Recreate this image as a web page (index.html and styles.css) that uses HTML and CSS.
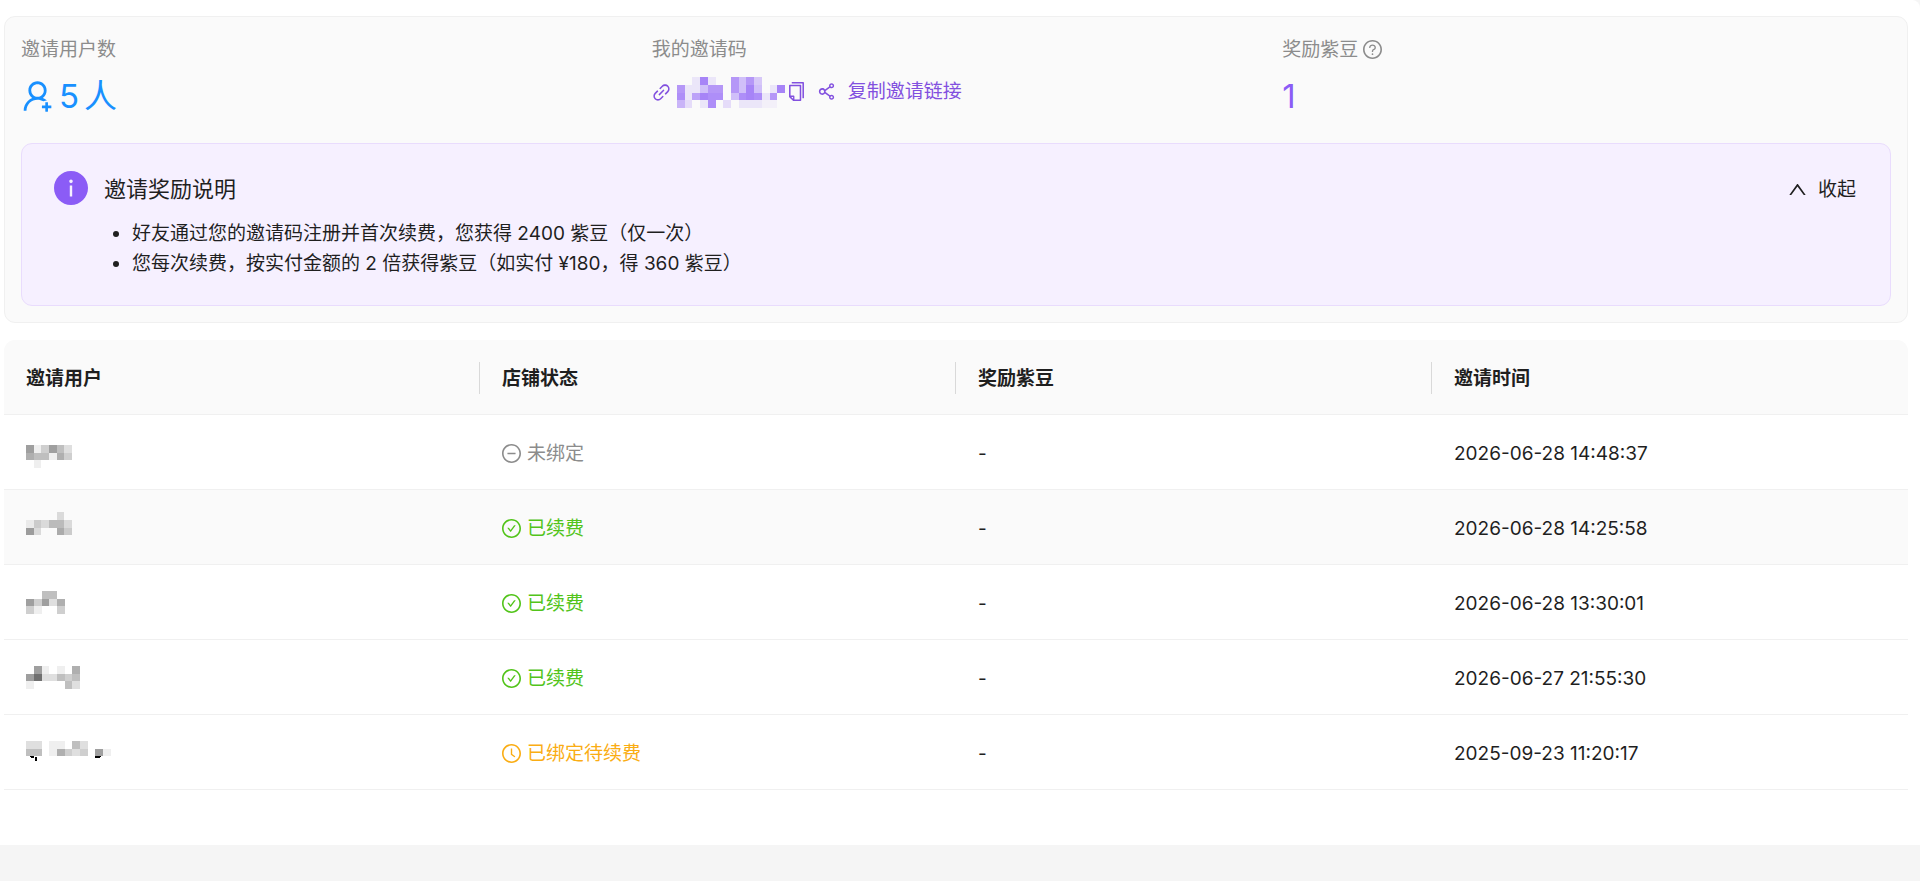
FILE: index.html
```html
<!DOCTYPE html>
<html lang="zh-CN">
<head>
  <meta charset="UTF-8">
  <meta name="viewport" content="width=device-width, initial-scale=1.0">
  <title>邀请奖励</title>
  <link rel="stylesheet" href="styles.css">
</head>
<body>
  <!-- 图标定义 -->
  <svg class="icon-defs" aria-hidden="true">
    <symbol id="icon-user-add" viewBox="64 64 896 896"><path d="M678.3 642.4c24.2-13 51.9-20.4 81.4-20.4h.1c3 0 4.4-3.6 2.2-5.6a371.67 371.67 0 00-103.7-65.8c-.4-.2-.8-.3-1.2-.5C719.2 505 759.6 431.7 759.6 349c0-137-110.8-248-247.5-248S264.7 212 264.7 349c0 82.7 40.4 156 102.6 201.1-.4.2-.8.3-1.2.5-44.7 18.9-84.8 46-119.3 80.6a373.42 373.42 0 00-80.4 119.5A373.6 373.6 0 00137 888.8a8 8 0 008 8.2h59.9c4.3 0 7.9-3.5 8-7.8 2-77.2 32.9-149.5 87.6-204.3C357 628.2 432.2 597 512.2 597c56.7 0 111.1 15.7 158 45.1a8.1 8.1 0 008.1.3zM512.2 521c-45.8 0-88.9-17.9-121.4-50.4A171.2 171.2 0 01340.5 349c0-45.9 17.9-89.1 50.3-121.6S466.3 177 512.2 177s88.9 17.9 121.4 50.4A171.2 171.2 0 01683.9 349c0 45.9-17.9 89.1-50.3 121.6C601.1 503.1 558 521 512.2 521zM880 759h-84v-84c0-4.4-3.6-8-8-8h-56c-4.4 0-8 3.6-8 8v84h-84c-4.4 0-8 3.6-8 8v56c0 4.4 3.6 8 8 8h84v84c0 4.4 3.6 8 8 8h56c4.4 0 8-3.6 8-8v-84h84c4.4 0 8-3.6 8-8v-56c0-4.4-3.6-8-8-8z"/></symbol>
    <symbol id="icon-link" viewBox="64 64 896 896"><path d="M574 665.4a8.03 8.03 0 00-11.3 0L446.5 781.6c-53.8 53.8-144.6 59.5-204 0-59.5-59.5-53.8-150.2 0-204l116.2-116.2c3.1-3.1 3.1-8.2 0-11.3l-39.8-39.8a8.03 8.03 0 00-11.3 0L191.4 526.5c-84.6 84.6-84.6 221.5 0 306s221.5 84.6 306 0l116.2-116.2c3.1-3.1 3.1-8.2 0-11.3L574 665.4zm258.6-474c-84.6-84.6-221.5-84.6-306 0L410.3 307.6a8.03 8.03 0 000 11.3l39.7 39.7c3.1 3.1 8.2 3.1 11.3 0l116.2-116.2c53.8-53.8 144.6-59.5 204 0 59.5 59.5 53.8 150.2 0 204L665.3 562.6a8.03 8.03 0 000 11.3l39.8 39.8c3.1 3.1 8.2 3.1 11.3 0l116.2-116.2c84.5-84.6 84.5-221.5 0-306.1zM610.1 372.3a8.03 8.03 0 00-11.3 0L372.3 598.7a8.03 8.03 0 000 11.3l39.6 39.6c3.1 3.1 8.2 3.1 11.3 0l226.4-226.4c3.1-3.1 3.1-8.2 0-11.3l-39.5-39.6z"/></symbol>
    <symbol id="icon-copy" viewBox="64 64 896 896"><path d="M832 64H296c-4.4 0-8 3.6-8 8v56c0 4.4 3.6 8 8 8h496v688c0 4.4 3.6 8 8 8h56c4.4 0 8-3.6 8-8V96c0-17.7-14.3-32-32-32zM704 192H192c-17.7 0-32 14.3-32 32v530.7c0 8.5 3.4 16.6 9.4 22.6l173.3 173.3c2.2 2.2 4.7 4 7.4 5.5v1.9h4.2c3.5 1.3 7.2 2 11 2H704c17.7 0 32-14.3 32-32V224c0-17.7-14.3-32-32-32zM350 856.2L263.9 770H350v86.2zM664 888H414V746c0-22.1-17.9-40-40-40H232V264h432v624z"/></symbol>
    <symbol id="icon-share" viewBox="64 64 896 896"><path d="M752 664c-28.5 0-54.8 10-75.4 26.7L469.4 540.8a160.68 160.68 0 000-57.6l207.2-149.9C697.2 350 723.5 360 752 360c66.2 0 120-53.8 120-120s-53.8-120-120-120-120 53.8-120 120c0 11.6 1.6 22.7 4.7 33.3L439.9 415.8C410.7 377.1 364.3 352 312 352c-88.4 0-160 71.6-160 160s71.6 160 160 160c52.3 0 98.7-25.1 127.9-63.8l196.8 142.5c-3.1 10.6-4.7 21.8-4.7 33.3 0 66.2 53.8 120 120 120s120-53.8 120-120-53.8-120-120-120zm0-476c28.7 0 52 23.3 52 52s-23.3 52-52 52-52-23.3-52-52 23.3-52 52-52zM312 600c-48.5 0-88-39.5-88-88s39.5-88 88-88 88 39.5 88 88-39.5 88-88 88zm440 236c-28.7 0-52-23.3-52-52s23.3-52 52-52 52 23.3 52 52-23.3 52-52 52z"/></symbol>
    <symbol id="icon-question" viewBox="64 64 896 896"><path d="M512 64C264.6 64 64 264.6 64 512s200.6 448 448 448 448-200.6 448-448S759.4 64 512 64zm0 820c-205.4 0-372-166.6-372-372s166.6-372 372-372 372 166.6 372 372-166.6 372-372 372z"/><path d="M623.6 316.7C593.6 290.4 554 276 512 276s-81.6 14.5-111.6 40.7C369.2 344 352 380.7 352 420v7.6c0 4.4 3.6 8 8 8h48c4.4 0 8-3.6 8-8V420c0-44.1 43.1-80 96-80s96 35.9 96 80c0 31.1-22 59.6-56.1 72.7-21.2 8.1-39.2 22.3-52.1 40.9-13.1 19-19.9 41.8-19.9 64.9V620c0 4.4 3.6 8 8 8h48c4.4 0 8-3.6 8-8v-22.7a48.3 48.3 0 0130.9-44.8c59-22.7 97.1-74.7 97.1-132.5.1-39.3-17.1-76-48.3-103.3zM472 732a40 40 0 1080 0 40 40 0 10-80 0z"/></symbol>
    <symbol id="icon-info" viewBox="64 64 896 896"><path d="M512 64C264.6 64 64 264.6 64 512s200.6 448 448 448 448-200.6 448-448S759.4 64 512 64zm32 664c0 4.4-3.6 8-8 8h-48c-4.4 0-8-3.6-8-8V456c0-4.4 3.6-8 8-8h48c4.4 0 8 3.6 8 8v272zm-32-344a48.01 48.01 0 010-96 48.01 48.01 0 010 96z"/></symbol>
    <symbol id="icon-up" viewBox="64 64 896 896"><path d="M890.5 755.3L537.9 269.2c-12.8-17.6-39-17.6-51.7 0L133.5 755.3A8 8 0 00140 768h75c5.1 0 9.9-2.5 12.9-6.6L512 369.8l284.1 391.6c3 4.1 7.8 6.6 12.9 6.6h75c6.5 0 10.3-7.4 6.5-12.7z"/></symbol>
    <symbol id="icon-minus" viewBox="64 64 896 896"><path d="M696 480H328c-4.4 0-8 3.6-8 8v48c0 4.4 3.6 8 8 8h368c4.4 0 8-3.6 8-8v-48c0-4.4-3.6-8-8-8z"/><path d="M512 64C264.6 64 64 264.6 64 512s200.6 448 448 448 448-200.6 448-448S759.4 64 512 64zm0 820c-205.4 0-372-166.6-372-372s166.6-372 372-372 372 166.6 372 372-166.6 372-372 372z"/></symbol>
    <symbol id="icon-check" viewBox="64 64 896 896"><path d="M699 353h-46.9c-10.2 0-19.9 4.9-25.9 13.3L469 584.3l-71.2-98.8c-6-8.3-15.6-13.3-25.9-13.3H325c-6.5 0-10.3 7.4-6.5 12.7l124.6 172.8a31.8 31.8 0 0051.7 0l210.6-292c3.9-5.3.1-12.7-6.4-12.7z"/><path d="M512 64C264.6 64 64 264.6 64 512s200.6 448 448 448 448-200.6 448-448S759.4 64 512 64zm0 820c-205.4 0-372-166.6-372-372s166.6-372 372-372 372 166.6 372 372-166.6 372-372 372z"/></symbol>
    <symbol id="icon-clock" viewBox="64 64 896 896"><path d="M512 64C264.6 64 64 264.6 64 512s200.6 448 448 448 448-200.6 448-448S759.4 64 512 64zm0 820c-205.4 0-372-166.6-372-372s166.6-372 372-372 372 166.6 372 372-166.6 372-372 372z"/><path d="M686.7 638.6L544.1 535.5V288c0-4.4-3.6-8-8-8H488c-4.4 0-8 3.6-8 8v275.4c0 2.6 1.2 5 3.3 6.5l165.4 120.6c3.6 2.6 8.6 1.8 11.2-1.7l28.6-39c2.6-3.7 1.8-8.7-1.8-11.2z"/></symbol>
  </svg>

  <main class="page">
    <section class="card">
      <div class="stats">
        <div class="stat">
          <div class="stat-label">邀请用户数</div>
          <div class="stat-value blue">
            <svg class="icon"><use href="#icon-user-add"/></svg>
            <span>5</span>
            <span>人</span>
          </div>
        </div>
        <div class="stat">
          <div class="stat-label">我的邀请码</div>
          <div class="invite-code">
            <svg class="icon"><use href="#icon-link"/></svg>
            <svg class="mosaic code" viewBox="0 0 14 4" data-cells="002c200a6a50002 a226aa0a6c602c b29cbb06bcb2a0 7302b030222110"></svg>
            <button type="button" class="btn-copy" aria-label="复制邀请码"><svg class="icon"><use href="#icon-copy"/></svg></button>
            <button type="button" class="btn-share"><svg class="icon"><use href="#icon-share"/></svg>复制邀请链接</button>
          </div>
        </div>
        <div class="stat">
          <div class="stat-label">奖励紫豆<svg class="icon"><use href="#icon-question"/></svg></div>
          <div class="stat-value purple">1</div>
        </div>
      </div>

      <div class="notice">
        <svg class="icon notice-icon"><use href="#icon-info"/></svg>
        <div class="notice-body">
          <h2>邀请奖励说明</h2>
          <ul>
            <li>好友通过您的邀请码注册并首次续费，您获得 2400 紫豆（仅一次）</li>
            <li>您每次续费，按实付金额的 2 倍获得紫豆（如实付 ¥180，得 360 紫豆）</li>
          </ul>
        </div>
        <button type="button" class="btn-toggle"><svg class="icon"><use href="#icon-up"/></svg>收起</button>
      </div>
    </section>

    <table class="invite-table">
      <thead>
        <tr>
          <th>邀请用户</th>
          <th>店铺状态</th>
          <th>奖励紫豆</th>
          <th>邀请时间</th>
        </tr>
      </thead>
      <tbody>
        <tr>
          <td><svg class="mosaic" data-cells="000000 613642 544153 010000"></svg></td>
          <td><span class="status gray"><svg class="icon"><use href="#icon-minus"/></svg>未绑定</span></td>
          <td>-</td>
          <td>2026-06-28 14:48:37</td>
        </tr>
        <tr class="active">
          <td><svg class="mosaic" data-cells="000020 132442 620053 000000"></svg></td>
          <td><span class="status green"><svg class="icon"><use href="#icon-check"/></svg>已续费</span></td>
          <td>-</td>
          <td>2026-06-28 14:25:58</td>
        </tr>
        <tr>
          <td><svg class="mosaic" data-cells="00440 63625 31003"></svg></td>
          <td><span class="status green"><svg class="icon"><use href="#icon-check"/></svg>已续费</span></td>
          <td>-</td>
          <td>2026-06-28 13:30:01</td>
        </tr>
        <tr>
          <td><svg class="mosaic" data-cells="0610105 6922434 1000042"></svg></td>
          <td><span class="status green"><svg class="icon"><use href="#icon-check"/></svg>已续费</span></td>
          <td>-</td>
          <td>2026-06-27 21:55:30</td>
        </tr>
        <tr>
          <td><svg class="mosaic" data-cells="22011042000 44015323061 00000000000"><path d="M.4 2h.6v.2H.6zM1.15 2.1h.25v.5h-.25zM8.9 2h.8l-.2.2h-.5z"/></svg></td>
          <td><span class="status orange"><svg class="icon"><use href="#icon-clock"/></svg>已绑定待续费</span></td>
          <td>-</td>
          <td>2025-09-23 11:20:17</td>
        </tr>
      </tbody>
    </table>
  </main>

  <script>
    // 马赛克：每个字符是一格的深浅（十六进制）
    const CELL = 7.7;

    document.querySelectorAll('.mosaic').forEach((svg) => {
      const rows = svg.dataset.cells.split(' ');
      const cols = rows[rows.length - 1].length;
      svg.setAttribute('viewBox', `0 0 ${cols} ${rows.length}`);
      svg.setAttribute('width', Math.round(cols * CELL));
      svg.setAttribute('height', Math.round(rows.length * CELL));

      rows.forEach((row, y) => {
        [...row].slice(0, cols).forEach((level, x) => {
          if (level === '0') return;
          const rect = document.createElementNS('http://www.w3.org/2000/svg', 'rect');
          rect.setAttribute('x', x);
          rect.setAttribute('y', y);
          rect.setAttribute('width', 1);
          rect.setAttribute('height', 1);
          rect.setAttribute('fill-opacity', parseInt(level, 16) / 16);
          svg.appendChild(rect);
        });
      });
    });
  </script>
</body>
</html>
```
FILE: styles.css
```css
body {
  margin: 0;
  background-color: #f5f5f5;
  color: #1f1f1f;
  font-family: Inter, "Noto Sans CJK SC", sans-serif;
  font-size: 19px;
  line-height: 30px;
}
button {
  padding: 0;
  border: none;
  background: none;
  color: inherit;
  font: inherit;
  cursor: pointer;
}
.icon-defs {
  position: absolute;
  width: 0;
  height: 0;
}
.icon {
  width: 1em;
  height: 1em;
  flex: none;
  fill: currentColor;
  vertical-align: -3px;
}
.mosaic {
  display: block;
  flex: none;
  shape-rendering: crispEdges;
}
.page {
  background-color: #fff;
  border-top-right-radius: 8px;
  padding: 16px 12px 55px 4px;
}
.card {
  background-color: #fafafa;
  border: 1px solid #f0f0f0;
  border-radius: 11px;
  padding: 16px;
}

/* 统计 */
.stats {
  display: grid;
  grid-template-columns: repeat(3, 1fr);
  column-gap: 22px;
  margin-bottom: 25px;
}
.stat-label {
  margin-bottom: 8px;
  color: #8c8c8c;
  line-height: 34px;
}
.stat-label .icon {
  margin-left: 5px;
}
.stat-value {
  display: flex;
  align-items: center;
  gap: 5px;
  font-size: 33px;
  line-height: 43px;
}
.invite-code {
  display: flex;
  align-items: center;
  height: 34px;
  color: #8250df;
}
.code {
  margin: 0 2px 0 6px;
  fill: #8b5cf6;
}
.btn-share {
  margin-left: 11px;
}
.btn-share .icon {
  margin-right: 12px;
}
.blue { color: #1890ff; }
.purple { color: #8b5cf6; }
.gray { color: #8c8c8c; }
.green { color: #52c41a; }
.orange { color: #faad14; }

/* 奖励说明 */
.notice {
  display: flex;
  align-items: flex-start;
  gap: 16px;
  padding: 27px 34px 26px 32px;
  background-color: #f6f0ff;
  border: 1px solid #e9dcfd;
  border-radius: 11px;
}
.notice-icon {
  font-size: 34px;
  color: #8b5cf6;
}
.notice-body {
  flex: 1;
}
.notice h2 {
  margin: 0 0 12px;
  font-size: 22px;
  font-weight: normal;
  line-height: 36px;
}
.notice ul {
  margin: 0;
  padding-left: 28px;
}
.btn-toggle {
  line-height: 38px;
}
.btn-toggle .icon {
  margin-right: 11px;
}

/* 邀请列表 */
.invite-table {
  width: 100%;
  margin-top: 17px;
  table-layout: fixed;
  border-collapse: separate;
  border-spacing: 0;
}
.invite-table th,
.invite-table td {
  height: 71px;
  padding: 3px 22px 0;
  border-bottom: 1px solid #f0f0f0;
  text-align: left;
}
.invite-table .mosaic {
  margin-bottom: 3px;
}
.invite-table th {
  position: relative;
  background-color: #fafafa;
  font-weight: 600;
}
.invite-table th:first-child {
  border-top-left-radius: 11px;
}
.invite-table th:last-child {
  border-top-right-radius: 11px;
}
.invite-table th:not(:last-child)::after {
  content: "";
  position: absolute;
  top: 22px;
  right: 0;
  width: 1px;
  height: 32px;
  background-color: #d9d9d9;
}
.active td {
  background-color: #fafafa;
}
.status .icon {
  margin-right: 6px;
}
```
